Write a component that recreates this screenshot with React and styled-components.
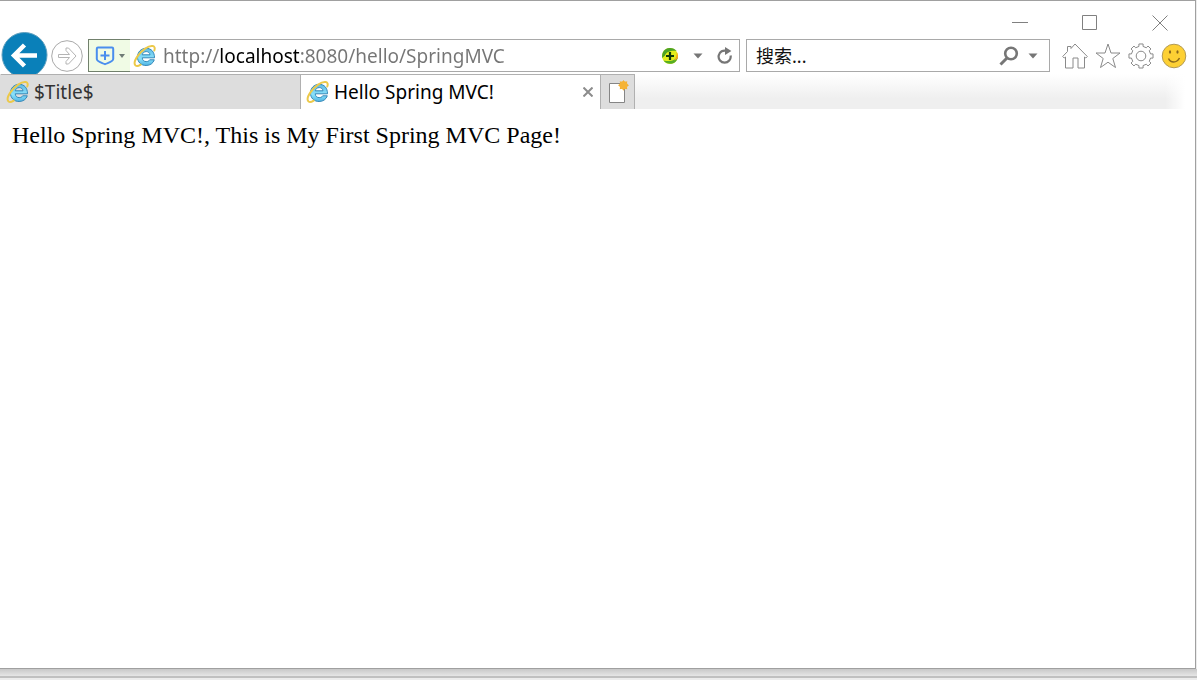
import React from 'react'
import styled, { createGlobalStyle } from 'styled-components'

const GlobalStyle = createGlobalStyle`
    * {
        box-sizing: border-box;
    }

    body {
        margin: 0;
        background-color: #ececec;
        font-family: "Noto Sans", "Noto Sans CJK SC", sans-serif;
    }

    button, input {
        font: inherit;
        color: inherit;
        border: none;
        padding: 0;
        background: none;
    }
`

const IeLogo = ({ size = 24 }) => (
    <svg width={size} height={size} viewBox="0 0 24 24" fill="none" aria-hidden="true">
        <defs>
            <linearGradient id="ieBlue" x1="0" y1="0" x2="0" y2="1">
                <stop offset="0" stopColor="#5fb9e3" />
                <stop offset="0.6" stopColor="#8be2fb" />
                <stop offset="1" stopColor="#4fb4e3" />
            </linearGradient>
        </defs>
        <path
            d="M21.500 13.800H9.200c.2 2.500 1.800 3.800 4 3.800 1.700 0 2.800-.6 3.500-1.800h4.600c-1.200 3.600-4.200 5.700-8.200 5.700C7.900 21.500 4.500 18 4.500 13s3.600-8.700 8.600-8.700c5.200 0 8.400 3.500 8.400 9.500zM9.300 10.800h7.700c-.3-2-1.700-3.200-3.700-3.200-2.200 0-3.600 1.200-4 3.200z"
            fill="url(#ieBlue)"
            stroke="#3488b8"
            strokeWidth="1"
        />
        <path
            d="M21.300 6.500c.9-2.500.3-4-1.500-4.400C15.800 1.200 8.500 6.200 4.400 12.400c-2.700 4.100-3.400 7.800-1.800 9.100 1.200.9 3.200.3 5-.9"
            stroke="#ecc94a"
            strokeWidth="2"
            strokeLinecap="round"
        />
    </svg>
)

const toothedRing = (teeth, outer, inner) => {
    const points = []
    const step = (Math.PI * 2) / teeth
    for (let i = 0; i < teeth; i++) {
        const mid = i * step
        const corners = [[-0.27, inner], [-0.22, outer], [0.22, outer], [0.27, inner]]
        corners.forEach(([turn, radius]) => {
            const angle = mid + turn * step
            points.push(`${(13 + radius * Math.sin(angle)).toFixed(2)} ${(13 - radius * Math.cos(angle)).toFixed(2)}`)
        })
    }
    return `M${points.join('L')}Z`
}

const Caret = () => (
    <svg width="10" height="6" viewBox="0 0 10 6" aria-hidden="true">
        <path d="M0.500 0.500h9L5 5.500z" fill="currentColor" />
    </svg>
)

const App = () => {
    return (
        <Desktop>
            <GlobalStyle />
            <Window>

                <TitleBar>
                    <WindowButton aria-label="Minimize">
                        <svg width="16" height="16" fill="none" stroke="currentColor"><path d="M0 7.500h16" /></svg>
                    </WindowButton>
                    <WindowButton aria-label="Maximize">
                        <svg width="16" height="16" fill="none" stroke="currentColor"><path d="M.5.5h14v14H.5z" /></svg>
                    </WindowButton>
                    <WindowButton aria-label="Close">
                        <svg width="16" height="16" fill="none" stroke="currentColor"><path d="M.5.5l15 15M15.500.5l-15 15" /></svg>
                    </WindowButton>
                </TitleBar>

                <NavBar>
                    <BackButton aria-label="Back">
                        <svg width="47" height="47" viewBox="0 0 47 47" fill="none">
                            <circle cx="23.500" cy="23" r="22.500" fill="#0a80b9" stroke="#5e9fbe" />
                            <path d="M36 23.500H14M23.500 13L13 23.500 23.500 34" stroke="#fff" strokeWidth="4.500" />
                        </svg>
                    </BackButton>
                    <ForwardButton aria-label="Forward">
                        <svg width="32" height="32" viewBox="0 0 32 32" fill="none" stroke="#b4b4b4">
                            <circle cx="16" cy="16" r="15.300" stroke="#a9a9a9" />
                            <path d="M7.500 14.500h11l-3.500-4v-2.500h2.500l7.500 8-7.500 8H15v-2.500l3.500-4h-11z" />
                        </svg>
                    </ForwardButton>

                    <AddressBar>
                        <ShieldButton aria-label="Protection">
                            <svg width="20" height="20" viewBox="0 0 20 20" fill="none" stroke="#4a8eee" strokeWidth="2">
                                <path d="M3 1.500h14q1.200 0 1.200 1.200V13c0 2.500-3.500 3.200-8.200 5.200C5.300 16.200 1.800 15.500 1.800 13V2.700Q1.800 1.500 3 1.500z" />
                                <path d="M10 5v9M5.500 9.500h9" />
                            </svg>
                            <svg width="6" height="4" viewBox="0 0 6 4"><path d="M0 0h6L3 4z" fill="#6f7b76" /></svg>
                        </ShieldButton>
                        <IeLogo />
                        <AddressInput aria-label="Address" defaultValue="http://localhost:8080/hello/SpringMVC" />
                        <AddressButton aria-label="Add-on" $width={18}>
                            <svg width="18" height="18" viewBox="0 0 18 18" fill="none">
                                <circle cx="9" cy="9" r="8" fill="#e3ee1c" />
                                <path d="M1.200 11C.5 6 3 1.500 8.500 1c3-.2 5.500 1 7 3C11 3 5 4.500 4 8.500z" fill="#4da326" />
                                <path d="M2.500 13.500c3 4 9 4.200 12 1.200 1.500-1.500 2-2.500 2.200-4.700-2.300 3-6.300 5-14.200 3.500z" fill="#56ad25" />
                                <path d="M15.500 5c1.800 2 1.800 5 .8 7l-3 1.500C15 11 16 8 15.500 5z" fill="#f7a51c" />
                                <path d="M9 5v8M5 9h8" stroke="#123c0b" strokeWidth="2.200" />
                            </svg>
                        </AddressButton>
                        <AddressButton aria-label="Show address list" $width={38}>
                            <Caret />
                        </AddressButton>
                        <AddressButton aria-label="Refresh" $width={16}>
                            <svg width="18" height="20" viewBox="0 0 18 20" fill="none">
                                <path d="M11 4.300A6.800 6.800 0 1 0 15.300 9.500" stroke="currentColor" strokeWidth="2.500" />
                                <path d="M9 0l7.200 4.500L9 9z" fill="currentColor" />
                            </svg>
                        </AddressButton>
                    </AddressBar>

                    <SearchBar>
                        <SearchInput aria-label="搜索" placeholder="搜索..." />
                        <AddressButton aria-label="Search" $width={20}>
                            <svg width="20" height="20" viewBox="0 0 20 20" fill="none" stroke="currentColor">
                                <circle cx="12" cy="7.500" r="5.800" strokeWidth="2.600" />
                                <path d="M8 12L1.500 18.500" strokeWidth="3" />
                            </svg>
                        </AddressButton>
                        <AddressButton aria-label="Search options" $width={28}>
                            <Caret />
                        </AddressButton>
                    </SearchBar>

                    <Tools>
                        <ToolButton aria-label="Home">
                            <svg width="26" height="26" viewBox="0 0 26 26" fill="none" stroke="currentColor">
                                <path d="M.7 13.500L5.500 8.500V3.500h3.500v2L13 1 25.300 13.500l-1.500 1.500-1.300-1v11h-6.500v-10h-5v10H3.500V14L2.200 15z" />
                            </svg>
                        </ToolButton>
                        <ToolButton aria-label="Favorites">
                            <svg width="26" height="26" viewBox="0 0 26 26" fill="none" stroke="currentColor">
                                <path d="M13 1l3 9h9l-7.200 5.500 2.700 9L13 19.200l-7.500 5.300 2.700-9L1 10h9z" />
                            </svg>
                        </ToolButton>
                        <ToolButton aria-label="Settings">
                            <svg width="26" height="26" viewBox="0 0 26 26" fill="none" stroke="currentColor">
                                <path d={toothedRing(8, 12.2, 9.8)} />
                                <circle cx="13" cy="13" r="4.800" />
                            </svg>
                        </ToolButton>
                        <ToolButton aria-label="Feedback">
                            <svg width="26" height="26" viewBox="0 0 26 26" fill="none">
                                <circle cx="13" cy="13" r="11.800" fill="#fdd034" stroke="#b29a55" />
                                <path d="M7.500 15.500c2 4.500 8 5 11-.5" stroke="#8a681c" strokeWidth="1.500" />
                                <ellipse cx="9" cy="9" rx="1.100" ry="1.800" fill="#8a681c" />
                                <ellipse cx="16.500" cy="9" rx="1.100" ry="1.800" fill="#8a681c" />
                            </svg>
                        </ToolButton>
                    </Tools>
                </NavBar>

                <TabBar>
                    <Tab>
                        <TabTitle><IeLogo />$Title$</TabTitle>
                    </Tab>
                    <Tab $active>
                        <TabTitle><IeLogo />Hello Spring MVC!</TabTitle>
                        <CloseTab aria-label="Close tab">
                            <svg width="10" height="10" fill="none" stroke="currentColor" strokeWidth="2"><path d="M.5.5l9 9M9.500.5l-9 9" /></svg>
                        </CloseTab>
                    </Tab>
                    <NewTab aria-label="New tab">
                        <svg width="22" height="24" viewBox="0 0 22 24" fill="none">
                            <path d="M2.500 3.500h15v19h-15z" fill="#fff" stroke="#858585" />
                            <path d="M16.500 0l1.300 2 2.500-.7-.5 2.500L22 5.300l-2.200 1.400.5 2.500-2.500-.5-1.300 2.100-1.300-2.100-2.500.5.5-2.500L11 5.300l2.200-1.500-.5-2.500 2.500.7z" fill="#f3ab2c" />
                            <circle cx="16.500" cy="5.300" r="4" fill="#f5b335" />
                        </svg>
                    </NewTab>
                    <TabSpace />
                </TabBar>

                <Page>Hello Spring MVC!, This is My First Spring MVC Page!</Page>

            </Window>
            <WindowShadow />
        </Desktop>
    )
}

export default App

const Desktop = styled.div`
    min-height: 100vh;
    display: flex;
    flex-direction: column;
`

const Window = styled.div`
    flex: 1;
    display: flex;
    flex-direction: column;
    margin-right: 1px;
    background-color: #fff;
    border: 1px solid #a0a0a0;
    border-left: none;
`

const WindowShadow = styled.div`
    height: 11px;
    background: linear-gradient(#c8c8c8, #e6e6e6 7px, #c0c0c0 7px, #c0c0c0 9px, #ececec 9px);
`

const TitleBar = styled.div`
    height: 31px;
    padding-top: 12px;
    display: flex;
    justify-content: flex-end;
`

const WindowButton = styled.button`
    width: 70px;
    display: flex;
    align-items: center;
    justify-content: center;
    color: #808080;
`

const NavBar = styled.div`
    height: 47px;
    padding: 0 8px 0 1px;
    display: flex;
    align-items: center;
`

const BackButton = styled.button`
    display: flex;
`

const ForwardButton = styled.button`
    display: flex;
    margin: 0 5px 0 3px;
`

const AddressBar = styled.div`
    flex: 1;
    min-width: 0;
    height: 33px;
    padding-right: 6px;
    display: flex;
    align-items: center;
    border: 1px solid #a9a9a9;
    font-size: 19px;
`

const ShieldButton = styled.button`
    align-self: stretch;
    width: 42px;
    margin: -1px 3px -1px -1px;
    display: flex;
    align-items: center;
    justify-content: center;
    gap: 4px;
    border: 1px solid #71806c;
    border-right: none;
    background-color: #f0fbe5;
`

/* the host stands out in black, the rest of the address is grey */
const AddressInput = styled.input`
    flex: 1;
    min-width: 0;
    margin-left: 6px;
    outline: none;
    color: transparent;
    caret-color: #000;
    background: linear-gradient(90deg, #757575 57px, #000 57px, #000 138px, #757575 138px);
    background-clip: text;
    -webkit-background-clip: text;
`

const AddressButton = styled.button`
    width: ${({ $width }) => $width}px;
    display: flex;
    align-items: center;
    justify-content: center;
    color: #767676;
`

const SearchBar = styled.div`
    width: 304px;
    height: 33px;
    margin: 0 12px 0 6px;
    padding: 0 2px 0 9px;
    display: flex;
    align-items: center;
    border: 1px solid #a9a9a9;
    font-size: 18px;
`

const SearchInput = styled.input`
    flex: 1;
    min-width: 0;
    outline: none;

    &::placeholder {
        color: #111;
        opacity: 1;
    }
`

const Tools = styled.div`
    display: flex;
    gap: 7px;
`

const ToolButton = styled.button`
    display: flex;
    color: #8a8a8a;
`

const TabBar = styled.div`
    position: relative;
    height: 35px;
    margin-top: -5px;
    padding-left: 1px;
    display: flex;
    background: #dddddd;
`

const Tab = styled.div`
    width: 300px;
    padding: 0 5px;
    display: flex;
    align-items: center;
    justify-content: space-between;
    border-top: 1px solid #b0b0b0;
    border-right: 1px solid #b0b0b0;
    background-color: ${({ $active }) => ($active ? '#fff' : '#dddddd')};
    color: ${({ $active }) => ($active ? '#000' : '#333')};
    font-size: 19px;
`

const TabTitle = styled.button`
    display: flex;
    align-items: center;
    gap: 4px;
`

const CloseTab = styled.button`
    display: flex;
    padding: 2px;
    color: #8c8c8c;
`

const NewTab = styled.button`
    width: 34px;
    display: flex;
    align-items: center;
    justify-content: center;
    border-top: 1px solid #b0b0b0;
    border-right: 1px solid #b0b0b0;
    background-color: #dddddd;
`

const TabSpace = styled.div`
    flex: 1;
    background:
        linear-gradient(90deg, transparent calc(100% - 30px), #fff calc(100% - 10px)),
        linear-gradient(#fff, #efefef 70%, #efefef),
        #fff;
`

const Page = styled.main`
    flex: 1;
    padding: 12px;
    font-family: "Liberation Serif", serif;
    font-size: 24px;
    line-height: 28px;
`
